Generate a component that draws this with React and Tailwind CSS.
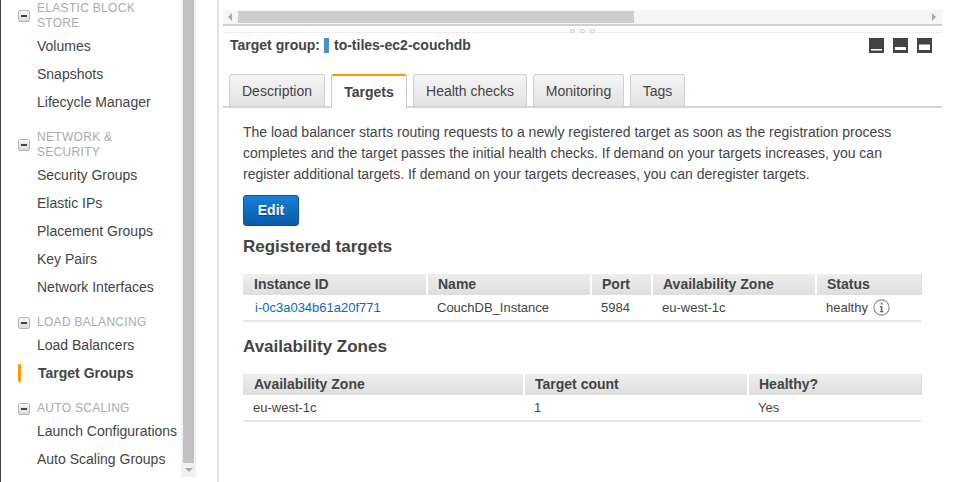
import React from 'react';

const sections = [
  { title: ['ELASTIC BLOCK', 'STORE'], items: ['Volumes', 'Snapshots', 'Lifecycle Manager'] },
  { title: ['NETWORK &', 'SECURITY'], items: ['Security Groups', 'Elastic IPs', 'Placement Groups', 'Key Pairs', 'Network Interfaces'] },
  { title: ['LOAD BALANCING'], items: ['Load Balancers', 'Target Groups'] },
  { title: ['AUTO SCALING'], items: ['Launch Configurations', 'Auto Scaling Groups'] },
];

const tabs = [
  { label: 'Description', w: 'w-[96px]' },
  { label: 'Targets', w: 'w-[76px]', active: true },
  { label: 'Health checks', w: 'w-[114px]' },
  { label: 'Monitoring', w: 'w-[91px]' },
  { label: 'Tags', w: 'w-[55px]' },
];

function Sidebar() {
  return (
    <div className="w-[182px] shrink-0 pl-[2px]">
      {sections.map((s) => (
        <div key={s.title[0]} className="pt-[1px] mb-[13px]">
          <div className="flex items-center">
            <div className="ml-[15px] w-[12px] h-[12px] rounded-[2px] border border-[#b5b5b5] bg-gradient-to-b from-[#f8f8f8] to-[#dcdcdc] flex items-center justify-center shrink-0">
              <div className="w-[6px] h-[2px] bg-[#444]" />
            </div>
            <div className="ml-[7px] text-[12px] leading-[15px] tracking-[0.3px] text-[#aaa]">
              {s.title.map((t) => <div key={t}>{t}</div>)}
            </div>
          </div>
          <div className="mt-[1px]">
            {s.items.map((item) => item === 'Target Groups' ? (
              <div key={item} className="h-[28px] flex items-center relative text-[14px] font-bold text-[#444] pl-[35px]">
                <div className="absolute left-[15px] top-[5px] w-[3px] h-[18px] rounded-[1px] bg-[#f90]" />
                {item}
              </div>
            ) : (
              <div key={item} className="h-[28px] flex items-center text-[14px] text-[#444] pl-[34px] whitespace-nowrap">{item}</div>
            ))}
          </div>
        </div>
      ))}
    </div>
  );
}

function DataTable({ cols, head, rows }) {
  return (
    <table className="w-[678px] table-fixed border-collapse text-[13px]">
      <colgroup>
        {cols.map((c, i) => <col key={i} style={{ width: c }} />)}
      </colgroup>
      <thead>
        <tr>
          {head.map((h, i) => (
            <th key={h} className={`h-[21px] p-0 text-left text-[14px] font-bold text-[#444] bg-gradient-to-b from-[#eeeeee] to-[#dedede] ${i === 0 ? 'pl-[11px]' : 'pl-[10px]'} ${i < head.length - 1 ? 'border-r-2 border-white' : 'border-r border-[#ddd]'}`}>{h}</th>
          ))}
        </tr>
      </thead>
      <tbody>
        {rows.map((r, i) => (
          <tr key={i} className="border-b-2 border-[#e6e6e6]">
            {r.map((c, j) => (
              <td key={j} className="h-[26px] p-0 pl-[10px] text-[#444]">{c}</td>
            ))}
          </tr>
        ))}
      </tbody>
    </table>
  );
}

function PanelIcon({ y, h }) {
  return (
    <svg width="15" height="15" viewBox="0 0 15 15">
      <rect width="15" height="15" fill="#444" />
      <rect x="2" y={y} width="11" height={h} fill="#fff" />
    </svg>
  );
}

function InfoIcon() {
  return (
    <svg width="17" height="17" viewBox="0 0 17 17" className="ml-[5px]">
      <circle cx="8.5" cy="8.5" r="7.6" fill="none" stroke="#8c8c8c" strokeWidth="1.1" />
      <path d="M6.8 7h2.6v5h1v1.2H6.8V12h1V8.2h-1z" fill="#666" />
      <rect x="7.7" y="3.7" width="1.7" height="1.9" fill="#666" />
    </svg>
  );
}

export default function App() {
  return (
    <div className="w-[955px] h-[482px] overflow-hidden bg-white flex text-[#444]" style={{ fontFamily: '"Liberation Sans", Arial, sans-serif' }}>
      <div className="w-[1px] bg-[#444] shrink-0" />
      <Sidebar />

      {/* sidebar scrollbar */}
      <div className="w-[15px] h-[477px] bg-[#f1f1f1] shrink-0 -ml-[2px] pl-[2px]">
        <div className="w-[11px] h-[463px] bg-[#c1c1c1]" />
        <div className="mt-[5px] ml-[2px] w-0 h-0 border-x-[4px] border-x-transparent border-t-[4px] border-t-[#a8a8a8]" />
      </div>

      <div className="w-[21px] shrink-0" />
      <div className="w-[2px] bg-[#e3e3e3] shrink-0" />

      {/* main panel */}
      <div className="w-[719px] ml-[4px] shrink-0">
        <div className="mt-[10px] h-[16px] bg-[#f5f5f5] border-b-2 border-[#cfcfcf] flex items-center relative">
          <div className="ml-[5px] w-0 h-0 border-y-[4px] border-y-transparent border-r-[4px] border-r-[#aaa]" />
          <div className="ml-[6px] w-[396px] h-[12px] bg-[#cdcdcd]" />
          <div className="ml-auto mr-[6px] w-0 h-0 border-y-[4px] border-y-transparent border-l-[4px] border-l-[#aaa]" />
        </div>
        <div className="mt-[6px] h-[1px] bg-[#eeeeee] relative">
          <div className="absolute left-[347px] -top-[3px] flex gap-[5px]">
            <div className="w-[5px] h-[4px] rounded-full border border-[#ccc] bg-white" />
            <div className="w-[5px] h-[4px] rounded-full border border-[#ccc] bg-white" />
            <div className="w-[5px] h-[4px] rounded-full border border-[#ccc] bg-white" />
          </div>
        </div>

        <div className="mt-[4px] h-[16px] flex items-center pl-[7px]">
          <span className="text-[14px] font-bold text-[#444]">Target group:</span>
          <span className="ml-[4px] w-[5px] h-[15px] bg-[#4a90c8]" />
          <span className="ml-[5px] text-[14px] font-bold text-[#444]">to-tiles-ec2-couchdb</span>
          <div className="ml-auto mr-[10px] flex gap-[9px]">
            <PanelIcon y={11} h={1.5} />
            <PanelIcon y={9} h={3} />
            <PanelIcon y={6.5} h={5.5} />
          </div>
        </div>

        <div className="mt-[21px] h-[34px] flex items-end border-b-2 border-[#d5d5d5] pl-[6px] gap-[6px]">
          {tabs.map((t) => t.active ? (
            <div key={t.label} className={`${t.w} h-[34px] -mb-[2px] bg-white border-x border-[#ccc] border-t-2 border-t-[#f90] rounded-t-[3px] flex items-center justify-center text-[14px] font-bold text-[#444]`}>{t.label}</div>
          ) : (
            <div key={t.label} className={`${t.w} h-[32px] pt-[1px] bg-gradient-to-b from-[#f5f5f5] to-[#e2e2e2] border-x border-t border-[#cfcfcf] rounded-t-[3px] flex items-center justify-center text-[14px] text-[#444]`}>{t.label}</div>
          ))}
        </div>

        <div className="pl-[20px]">
          <p className="mt-[14px] w-[670px] text-[14px] leading-[21px] text-[#444]">
            The load balancer starts routing requests to a newly registered target as soon as the registration process completes and the target passes the initial health checks. If demand on your targets increases, you can register additional targets. If demand on your targets decreases, you can deregister targets.
          </p>
          <button className="mt-[10px] block w-[56px] h-[31px] rounded-[3px] border border-[#15518f] bg-gradient-to-b from-[#1680d8] to-[#0a5cab] text-white text-[14px] font-bold [text-shadow:0_1px_1px_rgba(0,0,0,0.4)]">Edit</button>
          <h2 className="mt-[11px] text-[17px] leading-[20px] font-bold text-[#444]">Registered targets</h2>
          <div className="mt-[17px]">
            <DataTable
              cols={[184, 164, 61, 164, 105]}
              head={['Instance ID', 'Name', 'Port', 'Availability Zone', 'Status']}
              rows={[[
                <span className="pl-[2px] text-[#1166bb]">i-0c3a034b61a20f771</span>,
                'CouchDB_Instance',
                '5984',
                'eu-west-1c',
                <span className="flex items-center">healthy<InfoIcon /></span>,
              ]]}
            />
          </div>
          <h2 className="mt-[15px] text-[17px] leading-[20px] font-bold text-[#444]">Availability Zones</h2>
          <div className="mt-[17px]">
            <DataTable
              cols={[281, 224, 173]}
              head={['Availability Zone', 'Target count', 'Healthy?']}
              rows={[['eu-west-1c', '1', 'Yes']]}
            />
          </div>
        </div>
      </div>
    </div>
  );
}
